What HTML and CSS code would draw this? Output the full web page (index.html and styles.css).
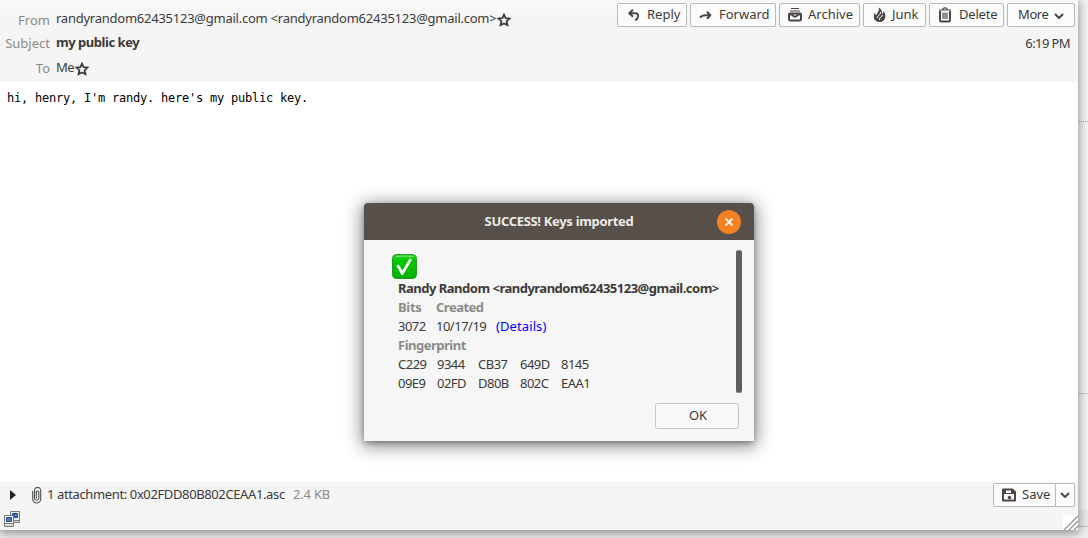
FILE: index.html
```html
<!DOCTYPE html>
<html lang="en">
<head>
<meta charset="utf-8">
<title>my public key</title>
<link rel="stylesheet" href="styles.css">
</head>
<body>
<div class="desktop">
  <div class="behind"><i class="dotted"></i><i class="rule"></i><i class="status"></i></div>
  <main class="window">
    <header class="header">
      <dl class="fields">
        <dt class="from-label">From</dt>
        <dd class="from"><span>randyrandom62435123@gmail.com &lt;randyrandom62435123@gmail.com&gt;</span><svg class="star" viewBox="0 0 14 14"><path d="M7 1.5 8.6 5.2 12.6 5.5 9.6 8.3 10.5 12.2 7 10.4 3.5 12.2 4.4 8.3 1.4 5.5 5.4 5.2Z"/></svg></dd>
        <dt class="subject-label">Subject</dt>
        <dd class="subject"><b>my public key</b></dd>
        <dt class="to-label">To</dt>
        <dd class="to"><span>Me</span><svg class="star" viewBox="0 0 14 14"><path d="M7 1.5 8.6 5.2 12.6 5.5 9.6 8.3 10.5 12.2 7 10.4 3.5 12.2 4.4 8.3 1.4 5.5 5.4 5.2Z"/></svg></dd>
      </dl>
      <div class="actions">
        <div class="toolbar">
          <button class="btn reply"><svg viewBox="0 0 16 16"><path class="line" d="M7 2.7 3.2 6.3 7 9.8M3.8 6.3H9C13 6.3 13.2 10.3 9.3 13.4"/></svg><span>Reply</span></button>
          <button class="btn forward"><svg viewBox="0 0 16 16"><path class="line" d="M9 4.8 12.3 8.3 9 11.8M12 8.3H7Q4 8.3 2 10.5"/></svg><span>Forward</span></button>
          <button class="btn archive"><svg viewBox="0 0 16 16"><path d="M4 1.5H12M3 4H13" fill="none" stroke="#4c4744"/><path class="line" d="M2 7.5Q2 6.5 3 6.5H13Q14 6.5 14 7.5V12Q14 13.5 12.5 13.5H3.500Q2 13.500 2 12ZM2 7.500H5Q8 12 11 7.500H14"/></svg><span>Archive</span></button>
          <button class="btn junk"><svg viewBox="0 0 16 16"><path class="solid" d="M6.500.5C11 2.500 9.500 6 10.500 7 11.500 6.500 11 5 11.500 4 15 8 13.500 15 8 15 1 15 .8 8.500 3.200 5.500 3 8 4.500 8.500 5 7 5.300 5 8 3.500 6.500.5Z"/><path d="M8.500 5C9 8 5.500 8.500 5 11M10.500 8C10 10.500 7 9.500 7.500 13" fill="none" stroke="#fbfbfb"/></svg><span>Junk</span></button>
          <button class="btn delete"><svg viewBox="0 0 16 16"><path class="line" d="M3 4V13Q3 14.500 4.500 14.500H11.500Q13 14.500 13 13V4"/><path d="M2 3H14M6 2.500Q6 .8 8 .8T10 2.500M6 5.500V12M8 5.500V12M10 5.500V12" fill="none" stroke="#4c4744" stroke-width="1.200"/></svg><span>Delete</span></button>
          <button class="btn more"><span>More</span><svg class="chev" viewBox="0 0 10 8"><path class="line" d="M1 2 5 6 9 2"/></svg></button>
        </div>
        <time class="time">6:19 PM</time>
      </div>
    </header>
    <pre class="message">hi, henry, I'm randy. here's my public key.</pre>
    <footer class="footer">
      <div class="attach">
        <svg class="tri" viewBox="0 0 6 10"><path d="M0 0 6 5 0 10Z" fill="#252321"/></svg>
        <svg class="clip" viewBox="0 0 10 17"><path d="M2.500 4.500V11.500A2.200 2.200 0 0 0 6.800 11.500V5A1.300 1.300 0 0 0 4.300 5V11.500M2.500 5V3.500A3 3 0 0 1 8.700 3.500V12A4 4 0 0 1 .7 12V4" fill="none" stroke="#514e4c" stroke-width="1.100"/></svg>
        <span class="file">1 attachment: 0x02FDD80B802CEAA1.asc</span><span class="size">2.4 KB</span>
        <div class="save"><button class="btn save-main"><svg viewBox="0 0 16 16"><path class="line" d="M3 2.500H11L14 5V13.500H2V2.500Z"/><path class="solid" d="M2 2H5V6H10V2H12L14 5V7H2Z"/><circle class="solid" cx="8.500" cy="10.500" r="1.800"/></svg><span>Save</span></button><button class="btn save-menu"><svg class="chev" viewBox="0 0 10 8"><path class="line" d="M1 2 5 6 9 2"/></svg></button></div>
      </div>
      <div class="statusbar">
        <svg class="net" viewBox="0 0 16 16"><g stroke="#777a76"><path d="M6.500.5H15.500V9.500H6.500Z" fill="#eee"/><path d="M7 9.500H15.500V11.500H7Z" fill="#ddd"/><path d="M.5 4.500H9.500V12.500H.5Z" fill="#f5f5f5"/><path d="M.5 12.500H9.500V15.500H.5Z" fill="#ddd"/></g><path d="M8.500 2.500H13.500V6.500H10.500V4H8.500ZM2.500 6.500H7.500V10.500H2.500Z" fill="#4a7cc9" stroke="#244a8b"/></svg>
        <svg class="grip" viewBox="0 0 15 15"><path d="M0 0H15V15H0Z" fill="#fff"/><path d="M1 15 15 1M6 15 15 6M11 15 15 11" stroke="#999" stroke-width="1.400"/></svg>
      </div>
    </footer>
  </main>
  <section class="dialog">
    <div class="titlebar"><h1>SUCCESS! Keys imported</h1><button class="close"><svg viewBox="0 0 10 10"><path d="M1.500 1.500 8.500 8.500M8.500 1.500 1.500 8.500" stroke="#f5f0ec" stroke-width="2"/></svg></button></div>
    <div class="content">
      <div class="info">
        <svg class="check" viewBox="0 0 25 25"><defs><linearGradient id="g" x2="0" y2="1"><stop stop-color="#35d335"/><stop offset=".25" stop-color="#00ca00"/><stop offset="1" stop-color="#00b000"/></linearGradient></defs><rect x=".5" y=".5" width="24" height="24" rx="4" fill="url(#g)" stroke="#239b23"/><path d="M4 2.500Q12 1.500 21 2.500" fill="none" stroke="#7be67b"/><path d="M4.500 12 6.500 10.500 10.500 16.500 17.500 4.500 20 5.500 11 21 9.500 21Z" fill="#fff"/></svg>
        <div class="details">
          <strong class="name">Randy Random &lt;randyrandom62435123@gmail.com&gt;</strong>
          <div class="meta"><b class="bits">Bits</b><b class="created">Created</b></div>
          <div class="meta"><span class="num">3072</span><span class="date">10/17/19</span><a>(Details)</a></div>
          <b class="fp-title">Fingerprint</b>
          <div class="fingerprint"><span>C229</span><span>9344</span><span>CB37</span><span>649D</span><span>8145</span><span>09E9</span><span>02FD</span><span>D80B</span><span>802C</span><span>EAA1</span></div>
        </div>
      </div>
      <i class="scroll"></i>
    </div>
    <div class="dialog-actions"><button class="ok">OK</button></div>
  </section>
</div>
</body>
</html>
```
FILE: styles.css
```css
* { box-sizing: border-box; }
body { margin: 0; color: #3c3a38; font: 13px/19px "Noto Sans", sans-serif; }
button { font: inherit; color: inherit; padding: 0; margin: 0; }
h1, dl, dd, pre { margin: 0; }
span, b, strong, time { white-space: nowrap; }
svg { display: block; flex: none; }
.desktop { position: relative; width: 1088px; height: 538px; overflow: hidden; background: #f5f5f5; }
.behind { position: absolute; inset: 0; }
.behind i { position: absolute; right: 0; width: 12px; }
.dotted { top: 121px; border-top: 1px dotted #aaa; }
.rule { top: 393px; border-top: 1px solid #d2d2d2; }
.behind .status { top: 510px; width: 100%; height: 28px; background: linear-gradient(#ececec 16px, #bcbcbc 16px, #bcbcbc 17px, #efefef 17px); }
.window { position: relative; width: 1078px; height: 530px; background: #fff; display: flex; flex-direction: column; box-shadow: 0 2px 10px 1px rgba(0,0,0,.42); }
.header { height: 82px; display: flex; justify-content: space-between; background: linear-gradient(#f9f9f9, #f5f5f5 20px); }
.fields { display: grid; grid-template-columns: 50px auto; grid-template-rows: 23px 25px 24px; column-gap: 6px; padding-top: 7px; align-items: center; }
.fields dt { text-align: right; color: #8c8b8a; padding-top: 1px; }
.fields .from-label, .fields .to-label { padding-top: 3px; }
.fields dd { display: flex; align-items: center; }
.from span { letter-spacing: -.245px; }
.subject b { letter-spacing: -.46px; }
.to span { letter-spacing: -.6px; }
.star { width: 14px; height: 14px; margin: 2px 0 0 1px; fill: none; stroke: #3c3a38; stroke-width: 1.7; }
.to .star { margin-top: 3px; }
.actions { display: flex; flex-direction: column; align-items: flex-end; padding: 3px 3px 0 0; }
.toolbar { display: flex; gap: 3px; }
.btn { display: flex; align-items: center; height: 24px; border: 1px solid #b9b9b9; border-radius: 2px; background: #fbfbfb; }
.btn svg { width: 16px; height: 16px; }
.line { fill: none; stroke: #4c4744; stroke-width: 2; stroke-linejoin: round; }
.solid { fill: #4c4744; }
.btn .chev { width: 10px; height: 8px; }
.toolbar span { margin-top: -2px; }
.reply { width: 70px; padding-left: 8px; gap: 5px; }
.forward { width: 86px; padding-left: 7px; gap: 5px; }
.archive { width: 81px; padding-left: 7px; gap: 5px; }
.junk { width: 63px; padding-left: 8px; gap: 4px; }
.delete { width: 75px; padding-left: 7px; gap: 6px; }
.delete span { letter-spacing: -.2px; }
.more { width: 68px; padding-left: 10px; gap: 5px; }
.more span { letter-spacing: -.4px; }
.btn.more .chev { margin-top: 1px; }
.time { margin: 7px 5px 0 0; letter-spacing: -.6px; }
.message { flex: 1; padding: 6px 7px; color: #000; font: 12px/20px "DejaVu Sans Mono", monospace; letter-spacing: -.224px; }
.footer { height: 48px; background: #f5f5f5; }
.attach { height: 26px; display: flex; align-items: center; padding: 0 3px 0 10px; }
.tri { width: 6px; height: 10px; }
.clip { width: 10px; height: 17px; margin: 0 5px 0 16px; }
.file { width: 246px; margin-top: -2px; letter-spacing: -.38px; }
.save { display: flex; margin-left: auto; }
.save-main { width: 63px; padding-left: 7px; gap: 5px; border-radius: 2px 0 0 2px; }
.save-main span { margin-top: -2px; }
.save-menu { width: 19px; border-left: 0; border-radius: 0 2px 2px 0; padding-left: 4px; }
.size { margin-top: -2px; color: #8c8b8a; letter-spacing: -.2px; }
.statusbar { height: 22px; display: flex; justify-content: space-between; align-items: flex-end; padding-left: 4px; }
.net { width: 16px; height: 16px; margin-bottom: 3px; }
.grip { width: 15px; height: 15px; }
.dialog { position: absolute; left: 364px; top: 203px; width: 390px; height: 238px; border-radius: 4px 4px 0 0; background: #f6f6f6; box-shadow: 0 3px 18px 2px rgba(0,0,0,.48), 0 2px 5px rgba(0,0,0,.28); }
.titlebar { height: 37px; display: grid; grid-template-columns: 1fr auto 1fr; align-items: center; background: #574f49; border-radius: 4px 4px 0 0; }
.titlebar h1 { grid-column: 2; font: bold 13px/19px "Noto Sans", sans-serif; letter-spacing: -.32px; color: #eeeae7; white-space: nowrap; }
.close { width: 24px; height: 24px; margin: 1px 13px 0 auto; border: 0; border-radius: 50%; background: #f58220; display: grid; place-items: center; }
.close svg { width: 10px; height: 10px; }
.content { height: 153px; display: flex; justify-content: space-between; padding: 10px 12px 0 28px; }
.check { width: 25px; height: 25px; margin-top: 4px; }
.details { padding-left: 6px; display: flex; flex-direction: column; letter-spacing: -.5px; }
.details > * { height: 19px; }
.meta { display: grid; grid-template-columns: 38px 60px auto; }
.meta .bits { letter-spacing: -.3px; }
.meta a { color: #00f; white-space: nowrap; letter-spacing: .1px; }
.meta b, .fp-title { color: #8b8a89; }
.details .fingerprint { height: 38px; display: grid; grid-template-columns: 39px 41px 42px 41px 36px; grid-auto-rows: 19px; }
.scroll { flex: none; width: 6px; height: 143px; border: 1px solid #8d8986; border-width: 1px 0; border-radius: 2px; background: #625d59; }
.dialog-actions { display: flex; justify-content: flex-end; padding: 10px 15px 0 0; }
.ok { width: 84px; height: 26px; border: 1px solid #c6c6c6; border-radius: 3px; background: #f8f8f8; padding: 0 0 2px 2px; }
```
